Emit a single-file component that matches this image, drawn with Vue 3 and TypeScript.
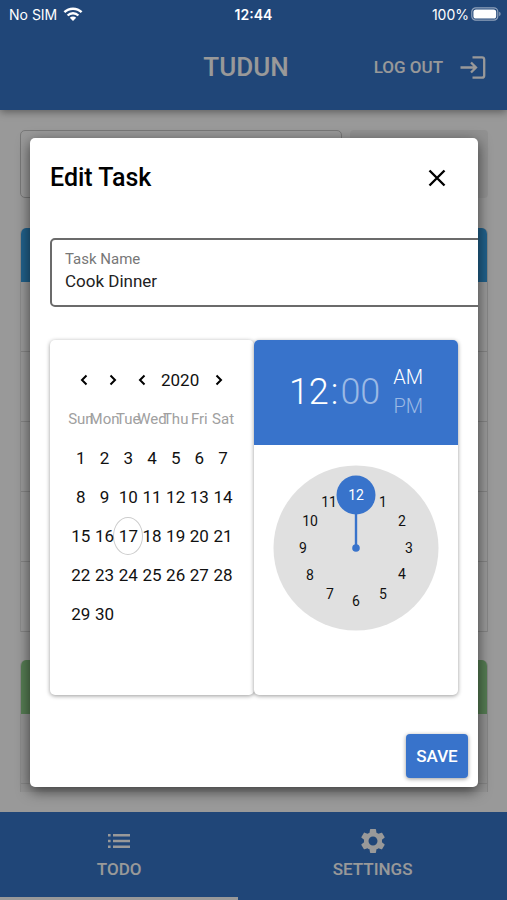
<script setup lang="ts">
import { ref, computed } from 'vue'

const taskName = ref('Cook Dinner')
const year = ref(2020)
const today = ref(17)
const hour = ref(12)
const meridiem = ref<'AM' | 'PM'>('AM')

const weekdays: string[] = ['Sun', 'Mon', 'Tue', 'Wed', 'Thu', 'Fri', 'Sat']
const weeks = computed<number[][]>(() => {
  const rows: number[][] = []
  for (let start = 1; start <= 30; start += 7) {
    rows.push(Array.from({ length: Math.min(7, 31 - start) }, (_, i) => start + i))
  }
  return rows
})

interface ClockPoint { value: number; x: number; y: number }
const clock: ClockPoint[] = Array.from({ length: 12 }, (_, i) => {
  const angle = ((i + 1) * Math.PI) / 6
  return {
    value: i + 1,
    x: Math.round(83 + 53 * Math.sin(angle)),
    y: Math.round(83 - 53 * Math.cos(angle)),
  }
})
const hand = computed<ClockPoint>(() => clock[hour.value - 1])
</script>

<template>
  <div class="app">
    <div class="status">
      <div class="carrier">
        <span>No SIM</span>
        <svg width="20" height="14" viewBox="0 0 20 14" fill="none" stroke="#fff" stroke-width="2.4" aria-hidden="true">
          <path d="M1.4 5.2a12.3 12.3 0 0 1 17.2 0" />
          <path d="M4.6 8.5a7.7 7.7 0 0 1 10.8 0" />
          <path d="M10 14 6.8 10.7a4.6 4.6 0 0 1 6.4 0z" fill="#fff" stroke="none" />
        </svg>
      </div>
      <strong class="clock-time">12:44</strong>
      <div class="battery">
        <span>100%</span>
        <svg width="30" height="14" viewBox="0 0 30 14" aria-hidden="true">
          <rect x=".8" y=".8" width="26" height="12.4" rx="4" fill="none" stroke="#90a2bb" stroke-width="1.2" />
          <rect x="2.4" y="2.4" width="22.8" height="9.2" rx="2.6" fill="#fff" />
          <path d="M28.2 4.8a2.4 2.4 0 0 1 0 4.4z" fill="#90a2bb" />
        </svg>
      </div>
    </div>

    <header class="bar">
      <h1>TUDUN</h1>
      <button class="logout" type="button">
        <span>LOG OUT</span>
        <svg width="28" height="26" viewBox="0 0 28 26" fill="none" stroke="currentColor" stroke-width="2.3" aria-hidden="true">
          <path d="M13.500 3.300H23q2.200 0 2.200 2.200v16q0 2.200-2.200 2.200h-9.500" />
          <path d="M1.500 13.500h15M12 8.500l5 5-5 5" />
        </svg>
      </button>
    </header>

    <main class="page">
      <div class="add-row">
        <div class="add-field"></div>
        <div class="add-button"></div>
      </div>
      <section class="list">
        <div class="list-head blue"></div>
        <div v-for="n in 5" :key="n" class="list-row"></div>
      </section>
      <section class="list done">
        <div class="list-head green"></div>
        <div class="list-row"></div>
      </section>
    </main>

    <nav class="tabs">
      <a href="#todo" class="tab active">
        <svg width="24" height="24" viewBox="0 0 24 24" fill="currentColor" aria-hidden="true">
          <path d="M1 5h2.600v2.600H1zM1 10.700h2.600v2.600H1zM1 16.400h2.600V19H1zM6 5h17v2.600H6zM6 10.700h17v2.600H6zM6 16.400h17V19H6z" />
        </svg>
        <span>TODO</span>
      </a>
      <a href="#settings" class="tab">
        <svg width="30" height="30" viewBox="0 0 24 24" fill="currentColor" aria-hidden="true">
          <path d="M19.140 12.940c.04-.3.06-.61.06-.94 0-.32-.02-.64-.07-.94l2.030-1.580c.18-.14.23-.41.12-.61l-1.920-3.320c-.12-.22-.37-.29-.59-.22l-2.390.96c-.5-.38-1.030-.7-1.620-.94l-.36-2.540c-.04-.24-.24-.41-.48-.41h-3.840c-.24 0-.43.17-.47.41l-.36 2.540c-.59.24-1.130.57-1.620.94l-2.390-.96c-.22-.08-.47 0-.59.22L2.740 8.870c-.12.21-.08.47.12.61l2.030 1.580c-.05.3-.09.63-.09.94s.02.64.07.94l-2.030 1.580c-.18.14-.23.41-.12.61l1.920 3.320c.12.22.37.29.59.22l2.390-.96c.5.38 1.030.7 1.620.94l.36 2.540c.05.24.24.41.48.41h3.840c.24 0 .44-.17.47-.41l.36-2.540c.59-.24 1.130-.56 1.620-.94l2.390.96c.22.08.47 0 .59-.22l1.920-3.320c.12-.22.07-.47-.12-.61l-2.010-1.580zM12 15.600c-1.980 0-3.600-1.620-3.600-3.600s1.620-3.600 3.600-3.600 3.600 1.620 3.600 3.600-1.620 3.600-3.600 3.600z" />
        </svg>
        <span>SETTINGS</span>
      </a>
    </nav>

    <div class="backdrop">
      <form class="dialog" role="dialog" aria-labelledby="dialog-title" @submit.prevent>
        <div class="dialog-head">
          <h2 id="dialog-title">Edit Task</h2>
          <button class="close" type="button" aria-label="Close">
            <svg width="18" height="18" viewBox="0 0 18 18" fill="none" stroke="#000" stroke-width="2.400" aria-hidden="true">
              <path d="M1.500 1.500l15 15M16.500 1.500l-15 15" />
            </svg>
          </button>
        </div>

        <div class="field">
          <label for="task-name">Task Name</label>
          <input id="task-name" v-model="taskName" type="text" />
        </div>

        <div class="pickers">
          <section class="picker calendar">
            <div class="cal-nav">
              <button type="button" aria-label="Previous month">
                <svg width="8" height="12" viewBox="0 0 8 12"><path d="M6.500 1.500 2 6l4.500 4.500" /></svg>
              </button>
              <button type="button" aria-label="Next month">
                <svg width="8" height="12" viewBox="0 0 8 12"><path d="M1.500 1.500 6 6l-4.500 4.500" /></svg>
              </button>
              <button type="button" aria-label="Previous year" @click="year--">
                <svg width="8" height="12" viewBox="0 0 8 12"><path d="M6.500 1.500 2 6l4.500 4.500" /></svg>
              </button>
              <span class="year">{{ year }}</span>
              <button type="button" aria-label="Next year" @click="year++">
                <svg width="8" height="12" viewBox="0 0 8 12"><path d="M1.500 1.500 6 6l-4.500 4.500" /></svg>
              </button>
            </div>
            <table class="days">
              <thead>
                <tr><th v-for="d in weekdays" :key="d" scope="col"><span>{{ d }}</span></th></tr>
              </thead>
              <tbody>
                <tr v-for="(week, i) in weeks" :key="i">
                  <td v-for="day in week" :key="day">
                    <button type="button" :class="{ today: day === today }">{{ day }}</button>
                  </td>
                </tr>
              </tbody>
            </table>
          </section>

          <section class="picker time">
            <div class="time-head">
              <div class="digits">
                <span>{{ hour }}</span><span class="colon">:</span><span class="dim">00</span>
              </div>
              <div class="meridiem">
                <button type="button" :class="{ dim: meridiem !== 'AM' }" @click="meridiem = 'AM'">AM</button>
                <button type="button" :class="{ dim: meridiem !== 'PM' }" @click="meridiem = 'PM'">PM</button>
              </div>
            </div>
            <svg class="face" width="166" height="166" viewBox="0 0 166 166">
              <circle cx="83" cy="83" r="82.500" fill="#e0e0e0" />
              <path :d="`M83 83L${hand.x} ${hand.y}`" stroke="#3873cb" stroke-width="2.400" />
              <circle cx="83" cy="83" r="3.800" fill="#3873cb" />
              <circle :cx="hand.x" :cy="hand.y" r="19.500" fill="#3873cb" />
              <text
                v-for="p in clock"
                :key="p.value"
                :x="p.x"
                :y="p.y + 5"
                :class="{ chosen: p.value === hour }"
                @click="hour = p.value"
              >{{ p.value }}</text>
            </svg>
          </section>
        </div>

        <div class="actions">
          <button class="save" type="submit">SAVE</button>
        </div>
      </form>
    </div>
  </div>
</template>

<style>
body {
  margin: 0;
  background: #fff;
}
</style>

<style scoped>
.app,
.app * {
  box-sizing: border-box;
}
.app {
  display: flex;
  flex-direction: column;
  min-height: 100vh;
  position: relative;
  font-family: Roboto, "Liberation Sans", sans-serif;
  color: #111;
}
button {
  border: 0;
  padding: 0;
  background: none;
  font: inherit;
  color: inherit;
  cursor: pointer;
}
h1,
h2 {
  margin: 0;
  font-weight: 500;
}
svg {
  display: block;
}

.status {
  position: absolute;
  z-index: 3;
  top: 0;
  left: 0;
  right: 0;
  height: 28px;
  padding: 0 6px 0 9px;
  display: grid;
  grid-template-columns: 1fr auto 1fr;
  align-items: center;
  color: #fff;
  font-family: Inter, sans-serif;
  font-size: 14px;
}
.carrier,
.battery {
  display: flex;
  align-items: center;
  gap: 6px;
}
.battery {
  justify-content: flex-end;
  gap: 2px;
}
.clock-time {
  padding-right: 3px;
  font-weight: 600;
}

.bar {
  flex: none;
  height: 110px;
  padding: 28px 20px 4px;
  display: grid;
  grid-template-columns: 1fr auto 1fr;
  align-items: center;
  background: #3675c8;
  color: #fff;
  box-shadow: 0 2px 8px rgba(0, 0, 0, .4);
}
.bar h1 {
  grid-column: 2;
  font-size: 26px;
  line-height: 32px;
  padding-right: 15px;
}
.logout {
  display: flex;
  justify-content: flex-end;
  align-items: center;
  gap: 16px;
  font-size: 17px;
  font-weight: 500;
  white-space: nowrap;
}

.page {
  flex: 1;
  padding: 20px 19px 20px 20px;
}
.add-row {
  display: flex;
  gap: 8px;
  margin-bottom: 30px;
}
.add-field {
  flex: 320;
  height: 68px;
  border: 1px solid #c8c8c8;
  border-radius: 5px;
}
.add-button {
  flex: 138;
  border-radius: 4px;
  background: #f2f2f2;
}
.list {
  border-radius: 6px 6px 0 0;
  overflow: hidden;
  border-right: 1px solid #e0e0e0;
  border-left: 1px solid #e6e6e6;
}
.list-head {
  height: 54px;
}
.blue {
  background: #38a0e6;
}
.green {
  background: #8ecf8a;
}
.list-row {
  height: 70px;
  border-bottom: 1px solid #dcdcdc;
}
.done {
  margin-top: 28px;
  padding-bottom: 8px;
  background: #f4f4f4;
}

.tabs {
  flex: none;
  height: 88px;
  display: grid;
  grid-template-columns: 47% 53%;
  background: #3675c8;
  color: #fff;
}
.tab {
  display: grid;
  grid-template-rows: 30px 24px;
  row-gap: 1px;
  justify-items: center;
  align-items: center;
  align-content: start;
  padding-top: 14px;
  border-bottom: 3px solid transparent;
  color: inherit;
  text-decoration: none;
  font-size: 17px;
  font-weight: 500;
}
.tab.active {
  border-bottom-color: #fff;
}

.backdrop {
  position: absolute;
  z-index: 2;
  inset: 0;
  padding: 24px 29px 0 30px;
  display: flex;
  align-items: center;
  background: rgba(0, 0, 0, .4);
}
.dialog {
  width: 100%;
  overflow: hidden;
  padding: 20px 20px 9px;
  border-radius: 5px;
  background: #fff;
  box-shadow: 0 4px 14px rgba(0, 0, 0, .6);
}
.dialog-head {
  display: flex;
  justify-content: space-between;
  align-items: center;
  height: 40px;
}
.dialog-head h2 {
  color: #000;
  font-size: 25px;
}
.close {
  width: 42px;
  height: 40px;
  display: grid;
  place-items: center;
}
.field {
  width: 120%;
  height: 69px;
  margin-top: 40px;
  padding: 10px 13px;
  border: 2px solid #6b6b6b;
  border-radius: 5px;
}
.field label {
  display: block;
  color: #777;
  font-size: 15px;
  line-height: 18px;
}
.field input {
  display: block;
  width: 100%;
  height: 26px;
  padding: 0;
  border: 0;
  outline: 0;
  background: none;
  color: #222;
  font: inherit;
  font-size: 17px;
}

.pickers {
  display: grid;
  grid-template-columns: 1fr 1fr;
  margin-top: 33px;
}
.picker {
  min-width: 0;
  height: 355px;
  border-radius: 5px;
  background: #fff;
  box-shadow: 0 1px 4px rgba(0, 0, 0, .4);
}
.calendar {
  padding: 20px 19px;
}
.cal-nav {
  display: flex;
  align-items: center;
  height: 40px;
}
.cal-nav button {
  width: 29px;
  height: 32px;
  display: grid;
  place-items: center;
}
.cal-nav path {
  fill: none;
  stroke: #000;
  stroke-width: 2;
}
.year {
  padding: 0 5px;
  font-size: 17px;
}
.days {
  width: 100%;
  table-layout: fixed;
  border-collapse: collapse;
}
.days th,
.days td {
  height: 39px;
  padding: 0;
  text-align: center;
}
.days th {
  color: #a0a0a0;
  font-size: 15px;
  font-weight: 400;
}
.days th span {
  display: flex;
  justify-content: center;
}
.days td button {
  display: flex;
  justify-content: center;
  align-items: center;
  width: 100%;
  height: 38px;
  font-size: 17px;
}
.days td button.today {
  width: 30px;
  margin: 0 -3px;
  border: 1px solid #ccc;
  border-radius: 50%;
}

.time-head {
  display: flex;
  justify-content: center;
  align-items: center;
  gap: 13px;
  height: 105px;
  border-radius: 5px 5px 0 0;
  background: #3873cb;
  color: #fff;
  font-weight: 300;
}
.digits {
  display: flex;
  font-size: 36px;
}
.colon {
  padding: 0 2px;
}
.dim {
  color: #9bb9e5;
}
.meridiem {
  display: grid;
  font-size: 20px;
  line-height: 29px;
}
.face {
  margin: 20px auto 0;
}
.face text {
  fill: #111;
  font-size: 14px;
  text-anchor: middle;
}
.face text.chosen {
  fill: #fff;
}

.actions {
  display: flex;
  justify-content: flex-end;
  margin: 39px -10px 0 0;
}
.save {
  width: 62px;
  height: 44px;
  border-radius: 4px;
  background: #3873cb;
  color: #fff;
  font-size: 17px;
  font-weight: 500;
  box-shadow: 0 1px 4px rgba(0, 0, 0, .4);
}
</style>
